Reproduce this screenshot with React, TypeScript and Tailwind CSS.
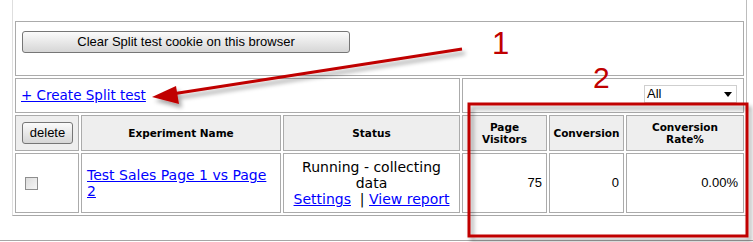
import React from 'react';

const verdana = "font-['DejaVu_Sans',Verdana,sans-serif]";
const arial = "font-['Liberation_Sans',Arial,sans-serif]";

function Checkbox() {
  return (
    <span className="block w-[13px] h-[13px] border border-[#8e8e8e] bg-gradient-to-br from-[#dcdcdc] to-[#f6f6f6]" />
  );
}

export default function App() {
  const cell = 'border border-[#ababab]';
  const head = `${cell} bg-[#eeeeee] flex items-center justify-center text-center text-[10.5px] leading-[12px] font-bold text-black ${verdana}`;
  const num = `${cell} bg-white flex items-center justify-end text-[13px] text-black ${arial}`;

  return (
    <div className="relative w-[753px] h-[242px] bg-white overflow-hidden">
      <div className="ml-[12px] w-[735px] border-l border-l-[#dedede] border-r border-r-[#bdbdbd] border-b border-b-[#a8a8a8] pt-[21px] px-[2px] pb-[2px]">
        <div className="grid grid-cols-[64px_200px_177px_85px_75px_118px] grid-rows-[55px_35px_36px_60px] gap-[2px]">
          {/* cookie row */}
          <div className={`${cell} col-span-6 bg-white pl-[6px] pt-[6px]`}>
            <button
              className={`w-[328px] h-[22px] rounded-[3px] border border-[#767676] bg-gradient-to-b from-[#fbfbfb] to-[#d6d6d6] text-[13px] text-black ${arial}`}
            >
              Clear Split test cookie on this browser
            </button>
          </div>

          {/* create row */}
          <div className={`${cell} col-span-3 bg-white flex items-center pl-[5px]`}>
            <a href="#" className={`text-[13.5px] text-[#0000ff] underline ${verdana}`}>
              + Create Split test
            </a>
          </div>
          <div className={`${cell} col-span-3 bg-white flex justify-end items-start pt-[6px] pr-[6px]`}>
            <div className={`w-[93px] h-[18px] border border-[#cfcfcf] bg-white flex items-center justify-between pl-[2px] pr-[4px] text-[13px] text-black ${arial}`}>
              <span>All</span>
              <svg width="8" height="5" viewBox="0 0 8 5">
                <path d="M0 0h8L4 5z" fill="#000" />
              </svg>
            </div>
          </div>

          {/* header row */}
          <div className={`${cell} bg-[#eeeeee] flex items-center pl-[6px]`}>
            <button
              className={`w-[51px] h-[22px] rounded-[3px] border border-[#767676] bg-gradient-to-b from-[#fbfbfb] to-[#d6d6d6] text-[13px] text-black ${arial}`}
            >
              delete
            </button>
          </div>
          <div className={head}>Experiment Name</div>
          <div className={head}>Status</div>
          <div className={head}>
            Page
            <br />
            Visitors
          </div>
          <div className={head}>Conversion</div>
          <div className={head}>
            Conversion
            <br />
            Rate%
          </div>

          {/* data row */}
          <div className={`${cell} bg-white flex items-center pl-[9px]`}>
            <Checkbox />
          </div>
          <div className={`${cell} bg-white flex items-center px-[5px]`}>
            <a href="#" className={`text-[14px] leading-[16px] text-[#0000ff] underline ${verdana}`}>
              Test Sales Page 1 vs Page 2
            </a>
          </div>
          <div className={`${cell} bg-white flex items-center justify-center text-center px-[6px] text-[14px] leading-[16px] text-black ${verdana}`}>
            <div>
              Running - collecting data
              <br />
              <a href="#" className="text-[#0000ff] underline">Settings</a>
              {'\u00a0 | '}
              <a href="#" className="text-[#0000ff] underline">View report</a>
            </div>
          </div>
          <div className={`${num} pr-[4px]`}>75</div>
          <div className={`${num} pr-[4px]`}>0</div>
          <div className={`${num} pr-[5px]`}>0.00%</div>
        </div>
      </div>
      <div className="mt-[24px] h-px bg-[#a6a6a6]" />

      {/* annotations */}
      <svg className="absolute left-0 top-0 pointer-events-none" width="753" height="242">
        <defs>
          <filter id="sh" x="-10%" y="-30%" width="120%" height="160%">
            <feDropShadow dx="3" dy="4" stdDeviation="2" floodColor="#000" floodOpacity="0.35" />
          </filter>
        </defs>
        <g filter="url(#sh)">
          <line x1="462" y1="49" x2="172" y2="94" stroke="#c00000" strokeWidth="3" />
          <polygon points="152,97 176,86 179,104" fill="#c00000" />
        </g>
        <rect x="469" y="104" width="278" height="132" fill="none" stroke="#c00000" strokeWidth="3" filter="url(#sh)" />
      </svg>
      <span className={`absolute left-[492px] top-[28px] text-[31px] leading-none text-[#c00000] ${arial}`}>1</span>
      <span className={`absolute left-[593px] top-[63px] text-[30px] leading-none text-[#c00000] ${arial}`}>2</span>
    </div>
  );
}
